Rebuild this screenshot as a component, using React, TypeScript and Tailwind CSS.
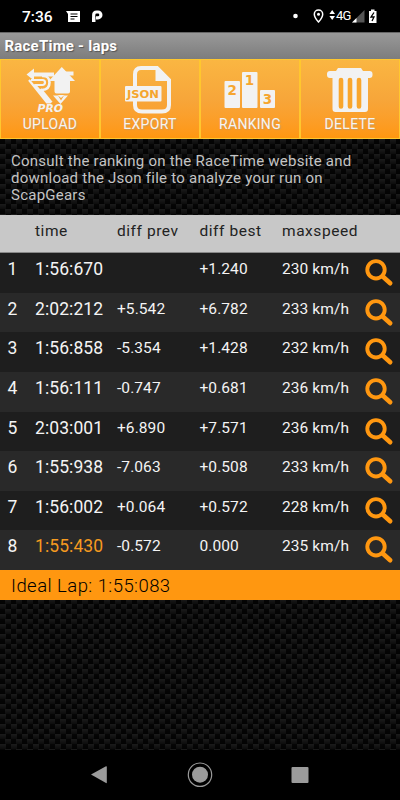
import React from "react";

const laps = [
  ["1", "1:56:670", "", "+1.240", "230 km/h"],
  ["2", "2:02:212", "+5.542", "+6.782", "233 km/h"],
  ["3", "1:56:858", "-5.354", "+1.428", "232 km/h"],
  ["4", "1:56:111", "-0.747", "+0.681", "236 km/h"],
  ["5", "2:03:001", "+6.890", "+7.571", "236 km/h"],
  ["6", "1:55:938", "-7.063", "+0.508", "233 km/h"],
  ["7", "1:56:002", "+0.064", "+0.572", "228 km/h"],
  ["8", "1:55:430", "-0.572", "0.000", "235 km/h"],
];

const UploadIcon = () => (
  <svg width="100" height="56" viewBox="0 0 100 56" fill="#f2f2f2">
    <path d="M26.500 15.500 34 9.500v4h20v4H34v4z" />
    <path d="M73.500 12.500v4h-6l-3-4z" />
    <path d="M31 21h11.500a2.500 2.500 0 0 1 0 5H35L50 43.500h-3L29 21" fill="none" stroke="#f2f2f2" strokeWidth="2.200" strokeLinejoin="round" />
    <path d="M42 31q7.500-.5 7.500-7.500T42 17" fill="none" stroke="#f2f2f2" strokeWidth="2.600" />
    <path d="M40.500 30 51.500 43.500" fill="none" stroke="#f2f2f2" strokeWidth="2.600" />
    <path d="M61.800 8 75 22H70V32.500q0 2-2 2H56.500q-2 0-2-2V22H48.800z" />
    <path d="M53 36.500h5l3 5 3-5h4L60.500 45z" />
    <path d="M57.500 36h7l-3.500 3z" />
    <text x="37.500" y="53" fontFamily="DejaVu Sans, sans-serif" fontSize="10" fontWeight="bold" fontStyle="italic" textLength="25.500" lengthAdjust="spacingAndGlyphs">PRO</text>
  </svg>
);

const ExportIcon = () => (
  <svg width="100" height="56" viewBox="0 0 100 56">
    <path d="M41 9h16l12 12v25q0 6.500-7 6.500H42q-7 0-7-6.500V15.500q0-6.500 6-6.500z" fill="none" stroke="#f2f2f2" strokeWidth="4" />
    <path d="M55.500 8v14h15.500z" fill="#f2f2f2" />
    <rect x="25" y="27" width="36.500" height="15.500" rx="1" fill="#f2f2f2" />
    <text x="27" y="38.800" fontFamily="DejaVu Sans, sans-serif" fontSize="11" fontWeight="bold" textLength="32" lengthAdjust="spacingAndGlyphs" fill="#f5a52e">JSON</text>
  </svg>
);

const RankingIcon = () => (
  <svg width="100" height="56" viewBox="0 0 100 56" fill="#f2f2f2">
    <rect x="24.500" y="22" width="15.500" height="27" rx="1" />
    <rect x="42" y="13" width="15.500" height="36" rx="1" />
    <rect x="60" y="31" width="15" height="18" rx="1" />
    <g fill="#f6a62f" fontFamily="DejaVu Sans, sans-serif" fontWeight="bold" fontSize="13.500" textAnchor="middle">
      <text x="32.200" y="35.500">2</text>
      <text x="49.500" y="26.200">1</text>
      <text x="67.500" y="44.500">3</text>
    </g>
  </svg>
);

const DeleteIcon = () => (
  <svg width="100" height="56" viewBox="0 0 100 56" fill="#f2f2f2">
    <path d="M38 9h23l2 3h6.500a3 3 0 0 1 3 3v1a3 3 0 0 1-3 3H68v31q0 3-3 3H35.500q-3 0-3-3V19H30a3 3 0 0 1-3-3v-1a3 3 0 0 1 3-3h6z" />
    <path d="M41 21v26.500M50 21v26.500M59 21v26.500" stroke="#f9a62c" strokeWidth="4.600" strokeLinecap="round" />
  </svg>
);

const actions = [
  { label: "UPLOAD", Icon: UploadIcon },
  { label: "EXPORT", Icon: ExportIcon },
  { label: "RANKING", Icon: RankingIcon },
  { label: "DELETE", Icon: DeleteIcon },
];

const StatusBar = () => (
  <header className="flex h-8 shrink-0 items-center bg-black text-white">
    <span className="ml-[22px] w-[44px] pt-px text-[15.500px] leading-8 font-medium">7:36</span>
    <svg width="50" height="32" viewBox="66 0 50 32" fill="#fff">
      <path d="M66 11h14v11H68v-8z" />
      <path d="M70.500 14h7M70.500 16.500h7M70.500 19h4" stroke="#000" strokeWidth="1.100" />
      <path d="M92 17.500h3.500V22H92z" />
      <path d="M93.700 18v-3q0-3 3-3H98a2.900 2.900 0 0 1 0 5.800h-2" fill="none" stroke="#fff" strokeWidth="3.200" />
    </svg>
    <svg className="ml-auto" width="54" height="32" viewBox="282 0 54 32" fill="#fff">
      <circle cx="295.500" cy="16" r="2.300" />
      <path d="M318.500 22q-4.200-4.500-4.200-7.700a4.200 4.200 0 0 1 8.400 0q0 3.200-4.200 7.700z" fill="none" stroke="#fff" strokeWidth="1.500" />
      <circle cx="318.500" cy="14.300" r="1.500" />
      <path d="M332.200 10l2.800 4h-5.600zM332.200 20l2.800-4h-5.600z" />
    </svg>
    <span className="w-[16px] text-[13px] tracking-[-0.8px]">4G</span>
    <svg width="48" height="32" viewBox="352 0 48 32">
      <path d="M364.500 10v12.500H352z" fill="#555" />
      <path d="M356.500 18v4.500H352z" fill="#fff" />
      <path d="M369 11h2V9.500h3.500V11h2v12H369z" fill="#fff" />
      <path d="M374 12.500l-3 4.500h3l-2 4" fill="none" stroke="#000" strokeWidth="1.300" />
    </svg>
  </header>
);

const Magnifier = () => (
  <svg width="30" height="30" viewBox="0 0 30 30" fill="none" stroke="#ff9710" className="mt-[5px] shrink-0">
    <circle cx="12" cy="11.800" r="8.700" strokeWidth="3.900" />
    <path d="M18.500 18.200 26.200 25.300" strokeWidth="4.600" strokeLinecap="round" />
  </svg>
);

export default function App() {
  return (
    <div className="flex h-[800px] w-[400px] flex-col overflow-hidden bg-black font-['Roboto',sans-serif]">
      <StatusBar />
      <h1 className="h-[27px] shrink-0 border-t border-[#666] bg-linear-to-b from-[#999] to-[#7d7d7d] pl-[4.500px] text-[15px] font-bold leading-[26px] tracking-[0.220px] text-white [text-shadow:1px_1px_1px_#555]">
        RaceTime - laps
      </h1>
      <main className="flex min-h-0 flex-1 flex-col bg-[linear-gradient(#0000,#0008),conic-gradient(#1b1b1b_25%,#060606_0_50%,#1b1b1b_0_75%,#060606_0)] bg-size-[11px_5px,11px_10px]">
        <nav className="grid h-20 shrink-0 grid-cols-4">
          {actions.map(({ label, Icon }) => (
            <button key={label} className="flex flex-col items-center overflow-hidden border border-[#ffc72e] bg-linear-to-b from-[#fab642] via-[#f7a63a] to-[#ff970f] text-[14px] leading-[18px] text-[#f4f4f4]">
              <span className="-mt-px block w-[100px]"><Icon /></span>
              <span className="tracking-[0.300px] [text-shadow:1px_1px_1px_#9997]">{label}</span>
            </button>
          ))}
        </nav>
        <p className="h-[76px] shrink-0 whitespace-nowrap pl-[11px] pt-[13.500px] text-[15px] leading-[17.300px] tracking-[0.240px] text-[#c4c4c4]">
          Consult the ranking on the RaceTime website and<br />
          download the Json file to analyze your run on<br />
          ScapGears
        </p>
        <div className="grid h-[38px] shrink-0 grid-cols-[35px_82px_82.500px_82.500px_1fr] border-b border-[#888] bg-[#c8c8c8] pt-[6px] text-[15.500px] leading-5 tracking-[0.550px] text-[#222]">
          <span /><span>time</span><span>diff prev</span><span>diff best</span><span>maxspeed</span>
        </div>
        {laps.map(([lap, time, prev, best, speed], i) => (
          <div key={lap} className={`grid h-[39.625px] shrink-0 grid-cols-[35px_82px_82.500px_82.500px_82px_1fr] text-[15.500px] leading-8 tracking-[0.080px] text-[#f4f4f4] ${i % 2 ? "bg-[#292929]" : "bg-[#1e1e1e]"}`}>
            <span className="pl-[7.500px] text-[17.500px]">{lap}</span>
            <span className={`text-[17.500px] ${lap === "8" ? "text-[#f59a20]" : ""}`}>{time}</span>
            <span>{prev}</span>
            <span>{best}</span>
            <span>{speed}</span>
            <Magnifier />
          </div>
        ))}
        <div className="h-[30px] shrink-0 bg-[#ff9710] pl-[11px] pt-px text-[18.500px] font-light leading-[31px] tracking-[0.450px] text-black">Ideal Lap: 1:55:083</div>
      </main>
      <footer className="flex h-[50px] shrink-0 items-center justify-center bg-black">
        <svg width="218" height="50" viewBox="91 750 218 50" fill="#9b9b9b">
          <path d="M91 774.500 106 766.300q.8-.3.800.7v15.500q0 1-.8.600z" />
          <circle cx="200" cy="774.700" r="8" />
          <circle cx="200" cy="774.700" r="11.700" fill="none" stroke="#9b9b9b" strokeWidth="1.200" />
          <rect x="291.500" y="767" width="17" height="16" rx="1" />
        </svg>
      </footer>
    </div>
  );
}
